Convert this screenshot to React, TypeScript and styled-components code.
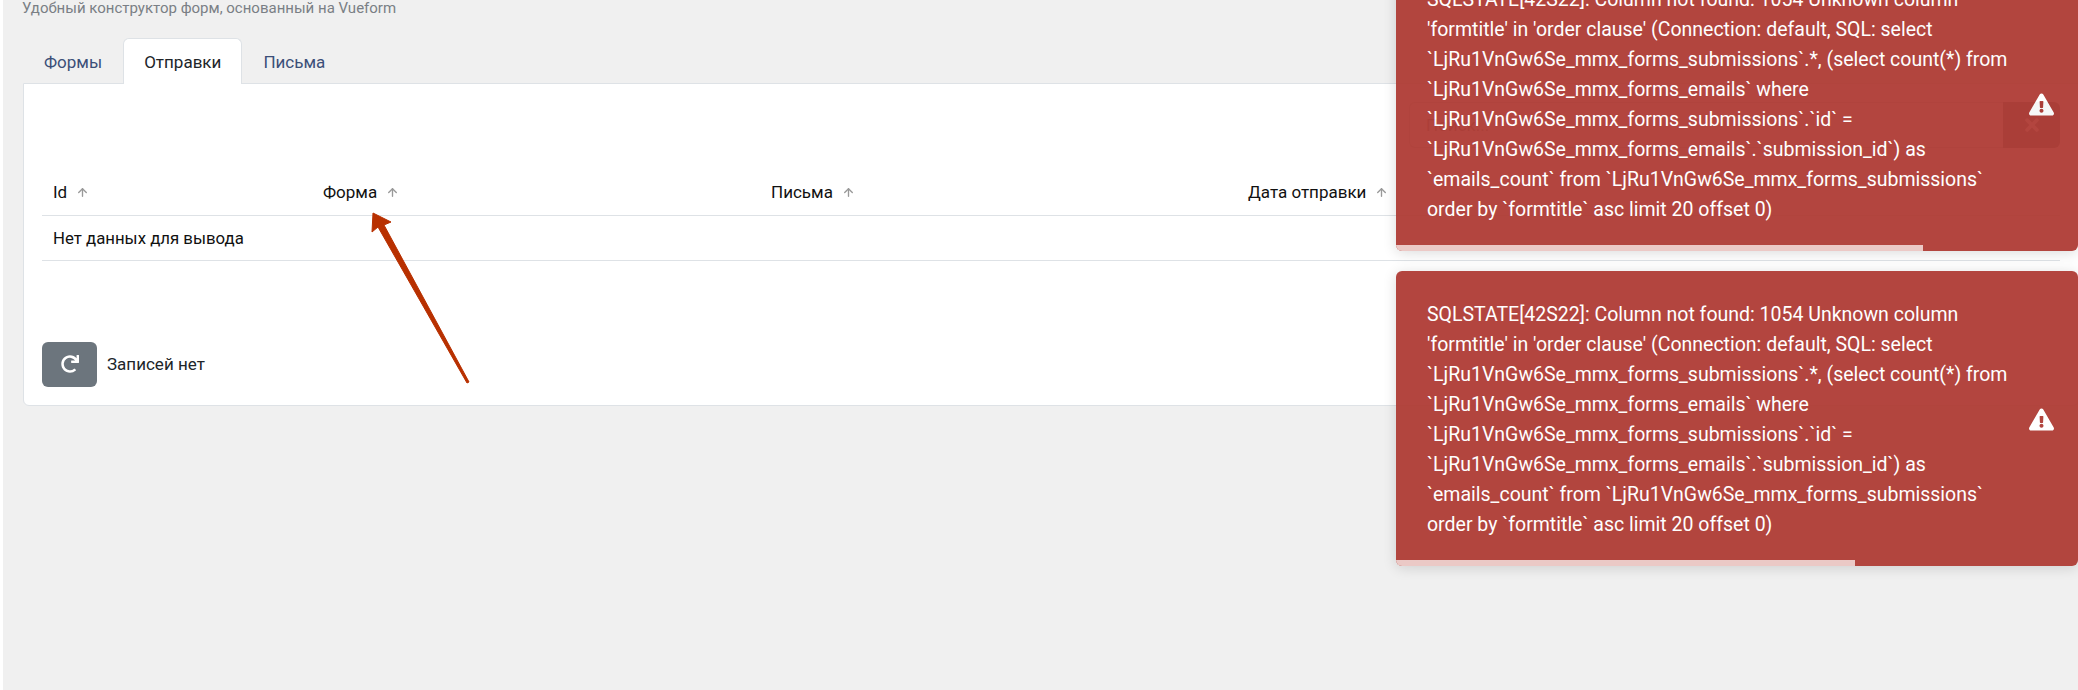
import React from 'react'
import styled, {createGlobalStyle} from 'styled-components'
import {ArrowUp} from 'lucide-react'
import {FaExclamationTriangle, FaRedo, FaTimes} from 'react-icons/fa'

const font = `Roboto, 'Open Sans', sans-serif`

const GlobalStyle = createGlobalStyle`
  html, body {
    margin: 0;
    padding: 0;
    background: #fff;
    overflow: hidden;
  }
  * {
    box-sizing: border-box;
  }
`

const Shell = styled.div`
  width: 2078px;
  height: 690px;
  padding-left: 3px;
  background: #fff;
  font-family: ${font};
  position: relative;
  overflow: hidden;
`

const Main = styled.main`
  height: 100%;
  padding-left: 20px;
  background: #f0f0f0;
`

const Subtitle = styled.p`
  margin: 0 0 0 -1px;
  height: 38px;
  font-size: 15px;
  line-height: 16px;
  color: #7a7f85;
`

const TabBar = styled.nav`
  display: flex;
  height: 46px;
  margin-bottom: -1px;
  position: relative;
`

const Tab = styled.a<{active?: boolean}>`
  display: flex;
  align-items: center;
  height: 46px;
  padding: 0 20px;
  font-size: 17px;
  color: ${props => props.active ? '#212529' : '#3b4f78'};
  background: ${props => props.active ? '#fff' : 'transparent'};
  border: 1px solid ${props => props.active ? '#dee2e6' : 'transparent'};
  border-bottom: 0;
  border-radius: 6px 6px 0 0;
`

const Card = styled.section`
  background: #fff;
  border: 1px solid #dee2e6;
  border-radius: 0 0 6px 6px;
  padding: 18px;
  width: 2056px;
`

const Toolbar = styled.div`
  display: flex;
  justify-content: flex-end;
  height: 46px;
  margin-bottom: 22px;
`

const SearchBox = styled.div`
  display: flex;
  width: 651px;
`

const SearchInput = styled.div`
  flex: 1;
  display: flex;
  align-items: center;
  padding-left: 16px;
  font-size: 17px;
  color: #6c757d;
  border: 1px solid #c9ced3;
  border-right: 0;
  border-radius: 6px 0 0 6px;
`

const ClearButton = styled.div`
  width: 57px;
  display: flex;
  align-items: center;
  justify-content: center;
  color: #fff;
  font-size: 20px;
  background: #5f6871;
  border-radius: 0 6px 6px 0;
`

const Table = styled.table`
  width: 2018px;
  border-collapse: collapse;
  table-layout: fixed;
  color: #111;
`

const HeadCell = styled.th`
  height: 45px;
  padding: 0 11px;
  text-align: left;
  font-weight: 400;
  font-size: 17px;
  border-bottom: 1px solid #dee2e6;
`

const HeadInner = styled.span`
  display: inline-flex;
  align-items: center;
  gap: 9px;

  svg {
    color: #999;
  }
`

const Cell = styled.td`
  height: 45px;
  padding: 0 11px;
  font-size: 16.8px;
  border-bottom: 1px solid #dee2e6;
`

const Footer = styled.div`
  display: flex;
  align-items: center;
  gap: 10px;
  margin-top: 81px;
  font-size: 17px;
  color: #212529;
`

const ReloadButton = styled.div`
  width: 55px;
  height: 45px;
  display: flex;
  align-items: center;
  justify-content: center;
  color: #fff;
  font-size: 18px;
  background: #6c757d;
  border-radius: 6px;
`

const Annotation = styled.svg`
  position: absolute;
  left: 0;
  top: 0;
  pointer-events: none;
`

const ToastStack = styled.div`
  position: absolute;
  top: -44px;
  right: 0;
  width: 682px;
  display: flex;
  flex-direction: column;
  gap: 20px;
`

const Toast = styled.div`
  position: relative;
  height: 295px;
  padding: 29px 0 0 31px;
  background: #af3c35;
  opacity: 0.95;
  color: #fff;
  border-radius: 6px;
  overflow: hidden;
`

const ToastShadow = styled.div`
  border-radius: 6px;
  box-shadow: 0 2px 14px rgba(0, 0, 0, 0.14);
`

const ToastText = styled.div`
  font-size: 19.5px;
  line-height: 30px;
  white-space: pre-line;
`

const ToastIcon = styled.div`
  position: absolute;
  left: 633px;
  top: 136px;
  font-size: 25px;
  line-height: 0;
`

const ToastProgress = styled.div`
  position: absolute;
  left: 0;
  bottom: 0;
  height: 6px;
  background: #ebc7c4;
`

const message = `SQLSTATE[42S22]: Column not found: 1054 Unknown column
'formtitle' in 'order clause' (Connection: default, SQL: select
\`LjRu1VnGw6Se_mmx_forms_submissions\`.*, (select count(*) from
\`LjRu1VnGw6Se_mmx_forms_emails\` where
\`LjRu1VnGw6Se_mmx_forms_submissions\`.\`id\` =
\`LjRu1VnGw6Se_mmx_forms_emails\`.\`submission_id\`) as
\`emails_count\` from \`LjRu1VnGw6Se_mmx_forms_submissions\`
order by \`formtitle\` asc limit 20 offset 0)`

const columns = [
  {title: 'Id', width: 270},
  {title: 'Форма', width: 448},
  {title: 'Письма', width: 477},
  {title: 'Дата отправки', width: 823},
]

const toasts = [527, 459]

export default function App() {
  return (
    <Shell>
      <GlobalStyle />
      <Main>
        <Subtitle>Удобный конструктор форм, основанный на Vueform</Subtitle>
        <TabBar>
          <Tab>Формы</Tab>
          <Tab active>Отправки</Tab>
          <Tab>Письма</Tab>
        </TabBar>
        <Card>
          <Toolbar>
            <SearchBox>
              <SearchInput>Поиск...</SearchInput>
              <ClearButton><FaTimes /></ClearButton>
            </SearchBox>
          </Toolbar>
          <Table>
            <colgroup>
              {columns.map(col => <col key={col.title} width={col.width} />)}
            </colgroup>
            <thead>
              <tr>
                {columns.map(col => (
                  <HeadCell key={col.title}>
                    <HeadInner>
                      {col.title}
                      <ArrowUp size={13} strokeWidth={2.5} />
                    </HeadInner>
                  </HeadCell>
                ))}
              </tr>
            </thead>
            <tbody>
              <tr>
                <Cell colSpan={4}>Нет данных для вывода</Cell>
              </tr>
            </tbody>
          </Table>
          <Footer>
            <ReloadButton><FaRedo /></ReloadButton>
            Записей нет
          </Footer>
        </Card>
      </Main>
      <Annotation width="2078" height="690" viewBox="0 0 2078 690">
        <polygon
          points="373,213 391,222 384,225 469,382 467,383 378,227 372,232"
          fill="#b83000"
          stroke="#b83000"
          strokeWidth="1"
          strokeLinejoin="round"
        />
      </Annotation>
      <ToastStack>
        {toasts.map((progress, i) => (
          <ToastShadow key={i}>
            <Toast>
              <ToastText>{message}</ToastText>
              <ToastIcon><FaExclamationTriangle /></ToastIcon>
              <ToastProgress style={{width: progress}} />
            </Toast>
          </ToastShadow>
        ))}
      </ToastStack>
    </Shell>
  )
}
